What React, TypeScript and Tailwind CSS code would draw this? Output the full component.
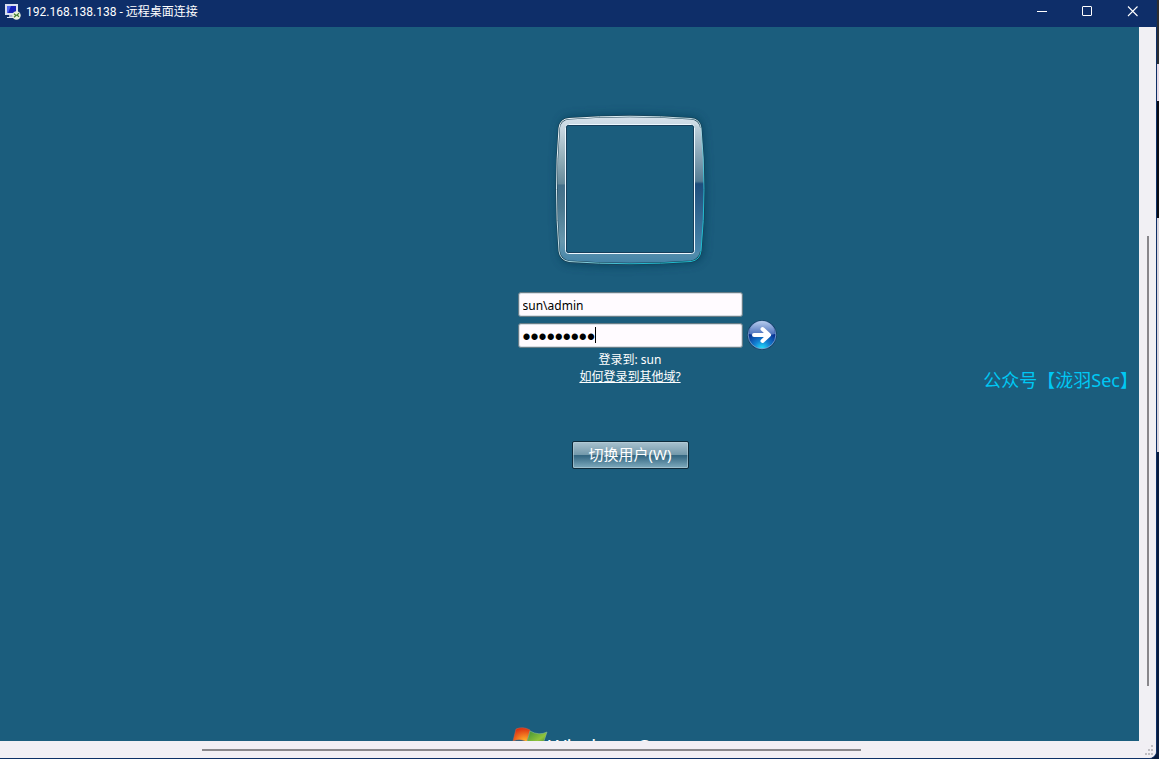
import { useState } from 'react';

function ConnectionIcon() {
  return (
    <svg width="16" height="16" viewBox="0 0 16 16" aria-hidden="true">
      <path d="M0 0h13v11H0z" fill="#d9dfef" />
      <path d="M2 2h9v7H2z" fill="#1620b8" />
      <path d="M2 2h4L3 9H2z" fill="#4f65ed" />
      <path d="M4 11h5v2H4z" fill="#aab4c9" />
      <path d="M2 13h8v1H2z" fill="#e4e8f2" />
      <circle cx="11.5" cy="11.5" r="4.2" fill="#e9f0de" />
      <path d="M9 9.8l2 1.7-2 1.8M14 9.2l-2 1.7 2 1.8" fill="none" stroke="#427d2f" strokeWidth="1.2" />
    </svg>
  );
}

function TitleBar() {
  return (
    <header className="flex h-[27px] shrink-0 items-start bg-[#0e2e69] text-white">
      <div className="flex h-6 flex-1 items-center gap-[5px] pl-[5px]">
        <ConnectionIcon />
        <h1 className="font-['Roboto','Noto_Sans_CJK_SC',sans-serif] text-[12px] leading-4">
          192.168.138.138 - 远程桌面连接
        </h1>
      </div>
      <button type="button" aria-label="最小化" className="flex h-[23px] w-[45px] items-center justify-center">
        <svg width="11" height="11" viewBox="0 0 11 11">
          <path d="M1 5.5h10" stroke="currentColor" />
        </svg>
      </button>
      <button type="button" aria-label="最大化" className="flex h-[23px] w-[45px] items-center justify-center">
        <svg width="11" height="11" viewBox="0 0 11 11">
          <rect x="1.5" y="0.5" width="9" height="9" rx="0.5" fill="none" stroke="currentColor" />
        </svg>
      </button>
      <button type="button" aria-label="关闭" className="flex h-[23px] w-[47px] items-center justify-center">
        <svg width="11" height="11" viewBox="0 0 11 11">
          <path d="M1 0.5l9.5 9.5M10.5 0.5l-9.5 9.5" stroke="currentColor" strokeWidth="1.1" />
        </svg>
      </button>
    </header>
  );
}

function AvatarFrame() {
  return (
    <svg width="180" height="180" viewBox="0 0 180 180" aria-hidden="true">
      <defs>
        <linearGradient id="frame" x1="0" y1="0" x2="0" y2="1">
          <stop offset="0" stopColor="#d6e2ec" />
          <stop offset="0.1" stopColor="#c3d3de" />
          <stop offset="0.3" stopColor="#8eabb6" />
          <stop offset="0.46" stopColor="#65899a" />
          <stop offset="0.465" stopColor="#44708b" />
          <stop offset="0.62" stopColor="#4b7990" />
          <stop offset="0.85" stopColor="#6797ae" />
          <stop offset="1" stopColor="#4183a8" />
        </linearGradient>
        <linearGradient id="frameRight" x1="0" y1="0" x2="0" y2="1">
          <stop offset="0" stopColor="#c3d3de" />
          <stop offset="0.44" stopColor="#557c94" />
          <stop offset="0.46" stopColor="#1e4d7c" />
          <stop offset="1" stopColor="#4a88ad" />
        </linearGradient>
        <linearGradient id="rim" x1="0" y1="0" x2="1" y2="1">
          <stop offset="0" stopColor="#f4fbff" />
          <stop offset="0.5" stopColor="#b9d8e2" />
          <stop offset="0.75" stopColor="#27b9d0" />
          <stop offset="1" stopColor="#19bfd2" />
        </linearGradient>
        <filter id="shadow" x="-20%" y="-20%" width="140%" height="140%">
          <feGaussianBlur stdDeviation="5" />
        </filter>
      </defs>
      <path
        d="M30 17Q90 12 152 17Q161 18 162 28Q168 90 163 151Q162 162 151 163Q90 169 30 164Q21 163 20 154Q14 90 20 28Q21 18 30 17Z"
        fill="#073b55"
        opacity="0.75"
        filter="url(#shadow)"
      />
      <path
        d="M29 18.500Q90 14 151 18.500Q160 19 161 28Q167 90 161 151Q160 160 151 161.500Q90 166 29 161.500Q20 160 19 151Q14 90 19 28Q20 19 29 18.500Z"
        fill="url(#frame)"
        stroke="#153c4e"
        strokeWidth="2"
      />
      <path d="M154 24L161 28Q167 90 161 151L154 154Z" fill="url(#frameRight)" />
      <path
        d="M29 18.500Q90 14 151 18.500Q160 19 161 28Q167 90 161 151Q160 160 151 161.500Q90 166 29 161.500Q20 160 19 151Q14 90 19 28Q20 19 29 18.500Z"
        fill="none"
        stroke="url(#rim)"
      />
      <rect x="25.5" y="24.5" width="129" height="129" rx="3" fill="#1b5d7d" stroke="#edf8ff" />
      <rect x="26.5" y="25.5" width="127" height="127" rx="2" fill="none" stroke="#163e5b" />
    </svg>
  );
}

function ArrowIcon() {
  return (
    <svg width="30" height="30" viewBox="0 0 30 30" aria-hidden="true">
      <defs>
        <radialGradient id="orb" cx="0.5" cy="1" r="0.75">
          <stop offset="0" stopColor="#23e5ff" />
          <stop offset="0.4" stopColor="#1380d2" />
          <stop offset="1" stopColor="#061f83" />
        </radialGradient>
        <linearGradient id="gloss" x1="0" y1="0" x2="0" y2="1">
          <stop offset="0" stopColor="#b7cced" />
          <stop offset="1" stopColor="#3f66b6" />
        </linearGradient>
      </defs>
      <circle cx="15" cy="15" r="14.8" fill="#173d65" />
      <circle cx="15" cy="15" r="13.8" fill="url(#orb)" stroke="#7fa9d6" strokeWidth="0.8" />
      <path d="M2 14a13 13 0 0 1 26 0Q15 18 2 14Z" fill="url(#gloss)" />
      <path d="M7 15h13M15.5 9l6.500 6-6.500 6" fill="none" stroke="#fff" strokeWidth="4" strokeLinejoin="round" strokeLinecap="round" />
    </svg>
  );
}

function WindowsFlag() {
  return (
    <svg width="36" height="32" viewBox="0 0 36 32" aria-hidden="true">
      <defs>
        <radialGradient id="red" cx="0.7" cy="1" r="1">
          <stop offset="0" stopColor="#ffc52c" />
          <stop offset="0.5" stopColor="#f27420" />
          <stop offset="1" stopColor="#d92c10" />
        </radialGradient>
        <linearGradient id="green" x1="0" y1="0" x2="1" y2="1">
          <stop offset="0" stopColor="#3e8f36" />
          <stop offset="0.6" stopColor="#8fc43b" />
          <stop offset="1" stopColor="#35772d" />
        </linearGradient>
      </defs>
      <path d="M4 2Q11-1 18 3L15 15Q8 11 1 14Z" fill="url(#red)" stroke="#c96a50" strokeWidth="0.5" />
      <path d="M18 4Q27 9 35 5L31 17Q23 20 15 15Z" fill="url(#green)" stroke="#8fbfa4" strokeWidth="0.5" />
      <path d="M1 16Q8 13 14 17L11 29Q5 25-2 28Z" fill="#2681c8" />
      <path d="M15 17Q23 21 31 18L27 30Q19 33 12 29Z" fill="#efb92d" />
    </svg>
  );
}

function LoginForm() {
  const [user, setUser] = useState('sun\\admin');
  const [password, setPassword] = useState('password1');

  return (
    <form className="flex flex-col items-center" onSubmit={(e) => e.preventDefault()}>
      <div className="flex flex-col gap-[6px]">
        <input
          aria-label="用户名"
          value={user}
          onChange={(e) => setUser(e.target.value)}
          className="h-[25px] w-[225px] rounded-[3px] border border-[#687d87] bg-[#fffbff] px-1 pt-px text-[12px] text-black outline-none ring-1 ring-[#9bb1bc]/40 ring-inset"
        />
        <div className="relative">
          <input
            type="password"
            aria-label="密码"
            value={password}
            onChange={(e) => setPassword(e.target.value)}
            className="block h-[25px] w-[225px] rounded-[3px] border border-[#687d87] bg-[#fffbff] px-1 pt-[3px] font-['Liberation_Sans'] text-[23px] leading-[20px] text-black outline-none ring-1 ring-[#9bb1bc]/40 ring-inset"
          />
          <span className="absolute top-1 left-[77px] h-4 w-px bg-black" />
          <button type="submit" aria-label="登录" className="absolute -top-[3px] left-[229px]">
            <ArrowIcon />
          </button>
        </div>
      </div>
      <p className="mt-[3px] text-[12px] leading-[17px] text-white">登录到: sun</p>
      <a href="#domain" className="text-[12px] leading-[17px] text-white underline">
        如何登录到其他域?
      </a>
      <button
        type="button"
        className="mt-[56px] h-[28px] w-[117px] rounded-[2px] border border-[#0d2b3b] bg-[linear-gradient(#a9c2cf,#7298aa_50%,#326580_52%,#7fabbe)] pb-[2px] text-[15px] leading-6 text-white inset-ring inset-ring-[#b8d0da]/60"
      >
        切换用户(W)
      </button>
    </form>
  );
}

// sliver of the desktop left uncovered by the session window
function DesktopEdge() {
  return (
    <div className="flex w-[2px] shrink-0 flex-col">
      <div className="h-16 bg-[#2d2d30]" />
      <div className="h-[37px] bg-[#e6d9e3]" />
      <div className="h-[117px] bg-[#0c0c12]" />
      <div className="h-[234px] bg-[#d9d4dc]" />
      <div className="flex-1 bg-[#0a1c3c]" />
    </div>
  );
}

export default function App() {
  return (
    <div className="flex h-screen bg-[#0a1c3c] font-['Noto_Sans','Noto_Sans_CJK_SC',sans-serif]">
      <div className="flex min-w-0 flex-1 flex-col overflow-hidden rounded-br-lg border-r border-b border-[#0d2f66] bg-[#f1eff4]">
        <TitleBar />
        <div className="flex min-h-0 flex-1">
          <main className="relative flex flex-1 flex-col items-center overflow-hidden bg-[#1b5d7d] pt-[73px] pl-[121px]">
            <AvatarFrame />
            <div className="mt-[12px]">
              <LoginForm />
            </div>
            <p className="absolute top-[341px] right-px text-[18px] leading-6 text-[#00c8f4]">
              公众号【泷羽Sec】
            </p>
            <div className="absolute -bottom-[20px] left-[512px] flex items-start text-white">
              <WindowsFlag />
              <span className="pt-[6px] text-[20px] leading-[28px] whitespace-nowrap">Windows Server</span>
            </div>
          </main>
          <div className="w-[17px] shrink-0 bg-[#f1f0f4] pt-[209px] pl-2">
            <div className="h-[450px] w-[2px] bg-[#88878b]" />
          </div>
        </div>
        <div className="flex h-[17px] shrink-0 items-center justify-between bg-[#f1eff4] pl-[202px]">
          <div className="h-[2px] w-[659px] bg-[#88878b]" />
          <svg width="12" height="12" viewBox="0 0 12 12" aria-hidden="true">
            <path d="M7 1h2v2H7zM4 5h2v2H4zM7 5h2v2H7zM1 9h2v2H1zM4 9h2v2H4zM7 9h2v2H7z" fill="#bfbec3" />
          </svg>
        </div>
      </div>
      <DesktopEdge />
    </div>
  );
}
